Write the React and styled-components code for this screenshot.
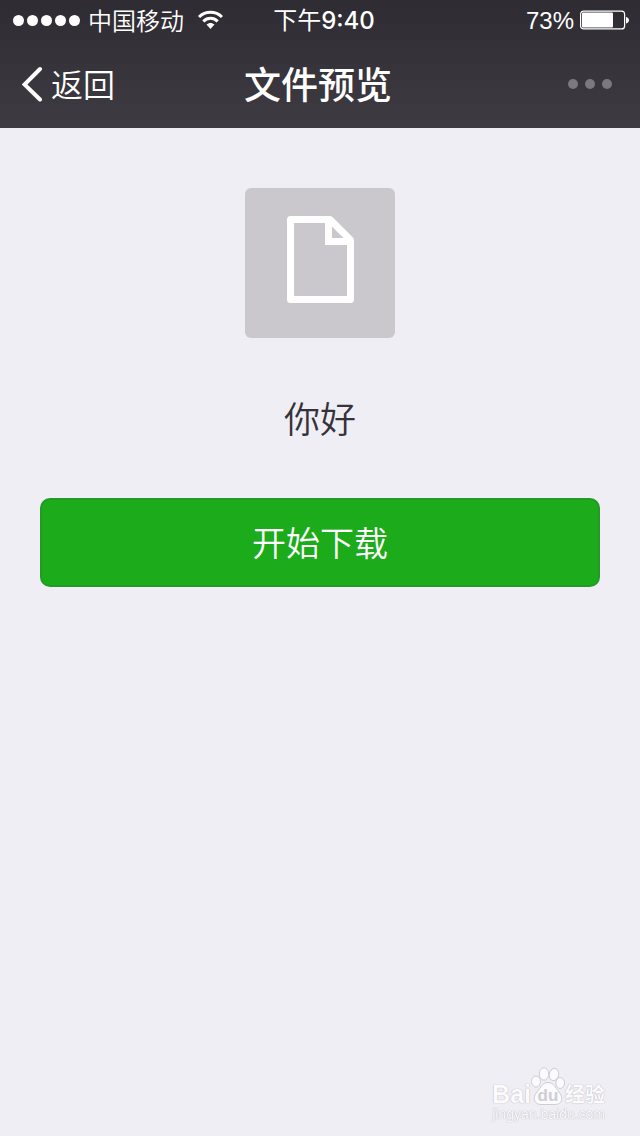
import React from 'react';
import styled, { createGlobalStyle } from 'styled-components';

const GlobalStyle = createGlobalStyle`
  * { box-sizing: border-box; }
  body {
    margin: 0;
    background: #f0eef5;
    font-family: "Noto Sans CJK SC", sans-serif;
    font-weight: 350;
    color: #35323a;
  }
`;

const Screen = styled.div`
  min-height: 100vh;
  display: flex;
  flex-direction: column;
`;

const Header = styled.header`
  background: linear-gradient(#2e2b33, #3e3b42);
  color: #fff;
`;

const StatusBar = styled.div`
  display: grid;
  grid-template-columns: 1fr auto 1fr;
  align-items: center;
  height: 40px;
  padding: 0 11px 0 13px;
  font-size: 24px;
  line-height: 36px;
`;

const StatusGroup = styled.div`
  display: flex;
  align-items: center;
  justify-content: ${({ $end }) => ($end ? 'flex-end' : 'flex-start')};
  gap: ${({ $end }) => ($end ? '6px' : '8px')};
`;

const Dots = styled.span`
  display: flex;
  gap: ${({ $gap }) => $gap};
`;

const Dot = styled.i`
  width: ${({ $size }) => $size};
  height: ${({ $size }) => $size};
  border-radius: 50%;
  background: ${({ $color }) => $color};
`;

const Carrier = styled.span`
  margin-right: 5px;
`;

const Percent = styled.span`
  padding-top: 2px;
  font-family: "Liberation Sans", sans-serif;
`;

const Time = styled.time`
  padding-left: 6px;
  font-weight: 400;
`;

const Clock = styled.span`
  font-family: Inter, sans-serif;
  font-weight: 500;
`;

const NavBar = styled.nav`
  display: grid;
  grid-template-columns: 1fr auto 1fr;
  align-items: center;
  height: 88px;
  padding: 0 28px 0 22px;
`;

const NavButton = styled.button`
  display: flex;
  align-items: center;
  gap: 8px;
  justify-self: ${({ $end }) => ($end ? 'end' : 'start')};
  min-height: 44px;
  padding: 0;
  border: 0;
  background: none;
  color: inherit;
  font: 350 32px/44px "Noto Sans CJK SC", sans-serif;
  cursor: pointer;
`;

const NavLabel = styled.span`
  padding-bottom: 2px;
`;

const Title = styled.h1`
  margin: 0;
  padding: 0 0 2px 2px;
  font-size: 37px;
  line-height: 44px;
  font-weight: 500;
`;

const Content = styled.main`
  display: flex;
  flex-direction: column;
  align-items: center;
  padding: 60px 40px;
`;

const FileTile = styled.div`
  display: grid;
  place-items: center;
  width: 150px;
  height: 150px;
  padding-bottom: 8px;
  border-radius: 6px;
  background: #cac8cc;
`;

const FileName = styled.p`
  margin: 55px 0 57px;
  font-size: 36px;
  line-height: 48px;
`;

const DownloadButton = styled.button`
  width: 100%;
  height: 89px;
  padding: 0 0 2px;
  border: 2px solid #239a26;
  border-radius: 10px;
  background: #1cab1a;
  color: #fff;
  font: 350 34px/48px "Noto Sans CJK SC", sans-serif;
  cursor: pointer;
`;

const Footer = styled.footer`
  display: flex;
  flex-direction: column;
  align-items: flex-end;
  margin-top: auto;
  padding: 0 35px 14px 0;
  color: #fbfafd;
  text-shadow: 0 0 1px #bdbbc2, 0 0 1px #bdbbc2;
`;

const Brand = styled.div`
  display: flex;
  align-items: flex-end;
`;

const Latin = styled.span`
  font: 700 25px/24px "Liberation Sans", sans-serif;
`;

const Chinese = styled.span`
  font-size: 20px;
  line-height: 24px;
  font-weight: 700;
`;

const Paw = styled.svg`
  display: block;
  font: 700 17px "Liberation Sans", sans-serif;
  text-shadow: none;
`;

const Site = styled.div`
  font: 400 14px/16px "Liberation Sans", sans-serif;
`;

export default function App() {
  return (
    <Screen>
      <GlobalStyle />
      <Header>
        <StatusBar>
          <StatusGroup>
            <Dots $gap="3px">
              {[0, 1, 2, 3, 4].map((n) => (
                <Dot key={n} $size="11px" $color="#fff" />
              ))}
            </Dots>
            <Carrier>中国移动</Carrier>
            <svg width="26" height="20" viewBox="0 0 26 20" fill="none" stroke="#fff" strokeWidth="3" aria-label="Wi-Fi">
              <path d="M2 7C8.500 .8 18.500 .8 25 7" />
              <path d="M6.300 11.300c4.200-4 10.200-4 14.400 0" />
              <path d="M9.500 14.600c2.400-2.200 5.600-2.200 8 0L13.500 19z" fill="#fff" stroke="none" />
            </svg>
          </StatusGroup>
          <Time>
            下午<Clock>9:40</Clock>
          </Time>
          <StatusGroup $end>
            <Percent>73%</Percent>
            <svg width="49" height="20" viewBox="0 0 49 20" aria-label="电池">
              <rect x=".6" y="1.100" width="44" height="17.800" rx="3" fill="none" stroke="#fff" strokeWidth="1.200" />
              <rect x="2" y="2.500" width="31" height="15" rx="1" fill="#fff" />
              <path d="M46 7c4 .5 4 6 0 6.500z" fill="#fff" />
            </svg>
          </StatusGroup>
        </StatusBar>
        <NavBar>
          <NavButton type="button">
            <svg width="21" height="36" viewBox="0 0 21 36" fill="none" stroke="#fff" strokeWidth="4" strokeLinecap="round">
              <path d="M18 3 2.500 18.500l15.500 15" />
            </svg>
            <NavLabel>返回</NavLabel>
          </NavButton>
          <Title>文件预览</Title>
          <NavButton type="button" $end aria-label="更多">
            <Dots $gap="7px">
              {[0, 1, 2].map((n) => (
                <Dot key={n} $size="10px" $color="#7b787f" />
              ))}
            </Dots>
          </NavButton>
        </NavBar>
      </Header>
      <Content>
        <FileTile>
          <svg width="67" height="87" viewBox="0 0 67 87" fill="none" stroke="#fff" strokeWidth="7" strokeLinejoin="round" aria-hidden="true">
            <path d="M3.500 3.500H43L63.500 24v59.500h-60z" />
            <path d="M41.500 4v21.500H63" strokeLinejoin="miter" />
          </svg>
        </FileTile>
        <FileName>你好</FileName>
        <DownloadButton type="button">开始下载</DownloadButton>
      </Content>
      <Footer>
        <Brand>
          <Latin>Bai</Latin>
          <Paw width="34" height="39" viewBox="0 0 34 39" fill="#fbfafd" stroke="#cfcdd4" strokeWidth="1">
            <ellipse cx="5" cy="14.500" rx="4.500" ry="5.500" />
            <ellipse cx="13" cy="7" rx="4.700" ry="6.200" />
            <ellipse cx="23" cy="7.500" rx="4.700" ry="6.200" transform="rotate(12 23 7.500)" />
            <ellipse cx="29.200" cy="16" rx="4.300" ry="5.500" />
            <path d="M17 15.500c6 0 7 5 11 9.500 5 6 3 12.500-4 12.500H10c-7 0-9-7-4-12.500C10 20.500 11 15.500 17 15.500z" />
            <text x="17" y="34" textAnchor="middle" fill="#cfcdd4" stroke="none">du</text>
          </Paw>
          <Chinese>经验</Chinese>
        </Brand>
        <Site>jingyan.baidu.com</Site>
      </Footer>
    </Screen>
  );
}
